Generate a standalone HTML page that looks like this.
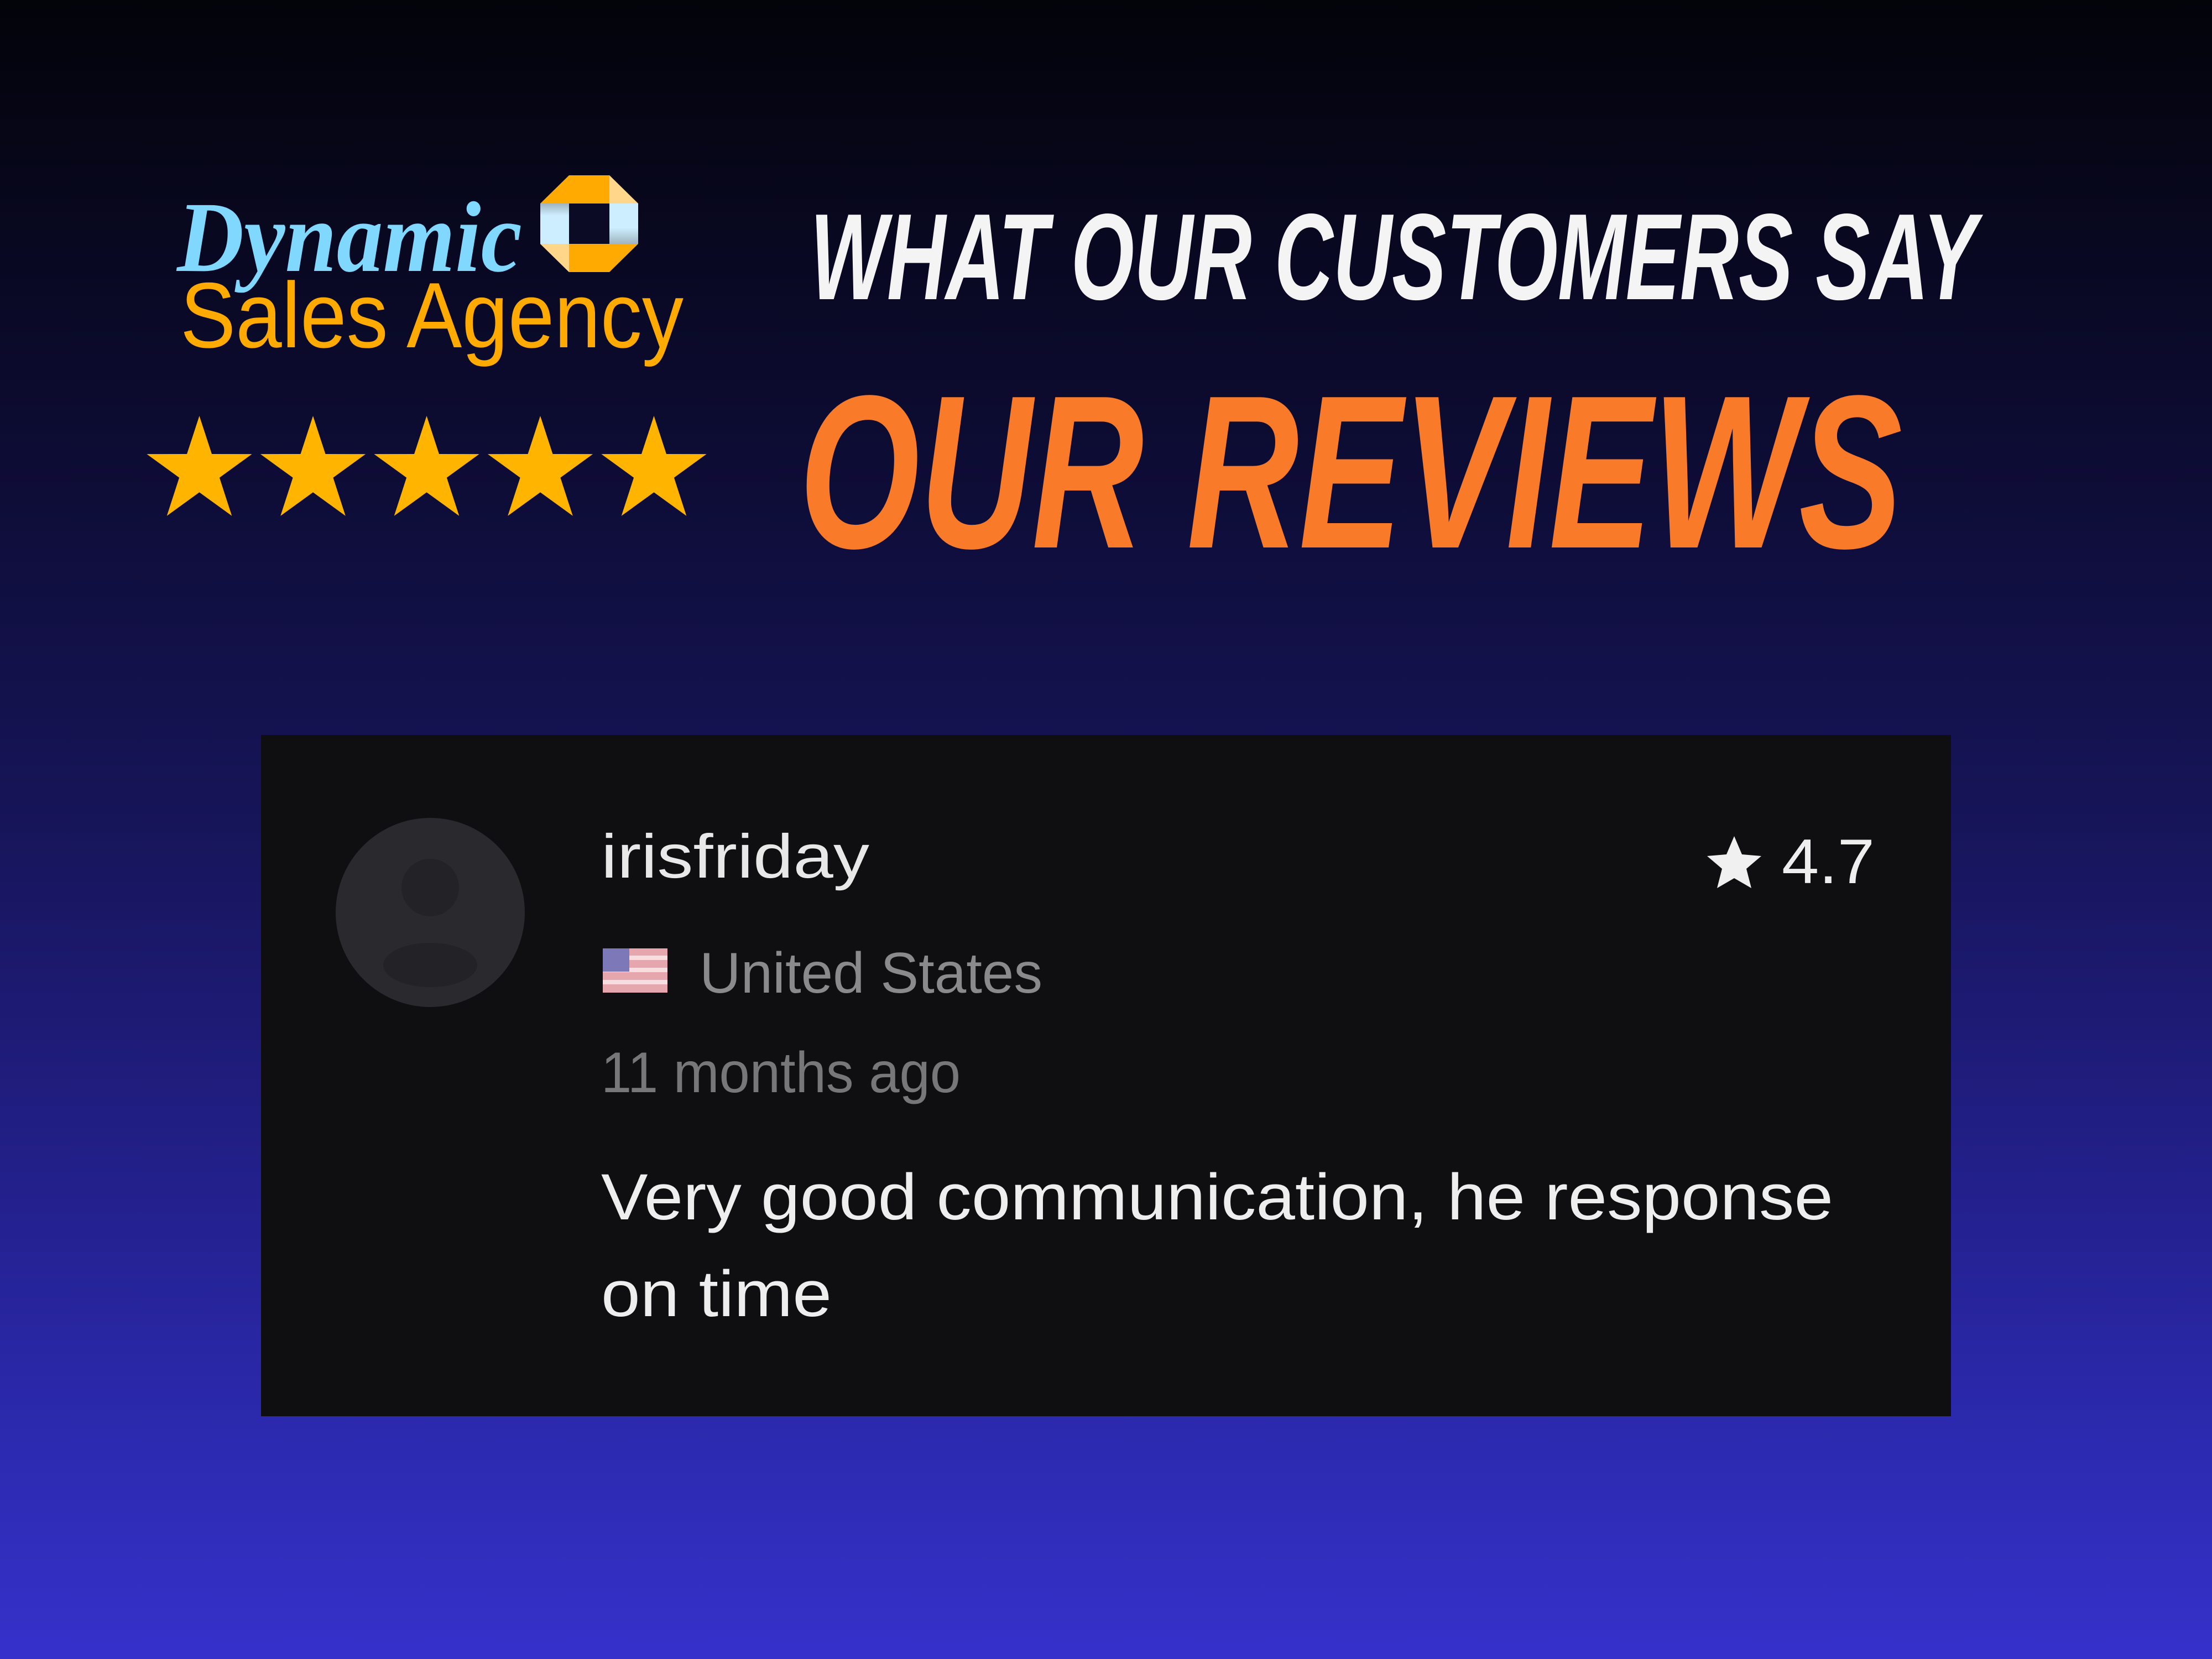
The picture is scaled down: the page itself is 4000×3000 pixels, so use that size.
<!DOCTYPE html>
<html><head><meta charset="utf-8"><style>
html,body{margin:0;padding:0;width:4000px;height:3000px;overflow:hidden}
svg{display:block}
</style></head><body>
<svg width="4000" height="3000" viewBox="0 0 4000 3000" xmlns="http://www.w3.org/2000/svg">
<defs>
<linearGradient id="bg" x1="0" y1="0" x2="0" y2="1">
<stop offset="0" stop-color="#03030a"/>
<stop offset="0.3" stop-color="#0e0d38"/>
<stop offset="0.5" stop-color="#17155a"/>
<stop offset="0.7" stop-color="#221f88"/>
<stop offset="0.87" stop-color="#2c2ab0"/>
<stop offset="1" stop-color="#3631cb"/>
</linearGradient>
<linearGradient id="side" x1="0" y1="0" x2="0" y2="1">
<stop offset="0" stop-color="#9fb4c0"/><stop offset="0.3" stop-color="#cdeeff"/><stop offset="1" stop-color="#cdeeff"/>
</linearGradient>
<linearGradient id="side2" x1="0" y1="0" x2="0" y2="1">
<stop offset="0" stop-color="#cdeeff"/><stop offset="0.6" stop-color="#cdeeff"/><stop offset="1" stop-color="#9fb4c0"/>
</linearGradient>
<path id="star" d="M0,-100 L22.5,-31 L95.1,-30.9 L36.4,11.8 L58.8,80.9 L0,38.3 L-58.8,80.9 L-36.4,11.8 L-95.1,-30.9 L-22.5,-31 Z"/>
</defs>
<rect width="4000" height="3000" fill="url(#bg)"/>

<!-- logo -->
<text x="320" y="490" font-family="Liberation Serif, serif" font-style="italic" font-weight="bold" font-size="182" fill="#80d8ff" textLength="624" lengthAdjust="spacingAndGlyphs">Dynamic</text>
<text x="326" y="628" font-family="Liberation Sans, sans-serif" font-size="168" fill="#ffaa00" textLength="910" lengthAdjust="spacingAndGlyphs">Sales Agency</text>
<polygon points="1029,317 1102,317 1154,368 977,368" fill="#ffaa00"/>
<polygon points="1102,317 1154,368 1102,368" fill="#ffd68a"/>
<rect x="977" y="368" width="52" height="73" fill="url(#side)"/>
<rect x="1102" y="368" width="52" height="73" fill="url(#side2)"/>
<rect x="1029" y="368" width="73" height="73" fill="#0b0b25"/>
<polygon points="977,441 1154,441 1102,492 1029,492" fill="#ffaa00"/>
<polygon points="977,441 1029,441 1029,492" fill="#ffd68a"/>

<!-- stars -->
<g fill="#ffb400">
<use href="#star" transform="translate(360.5,852)"/>
<use href="#star" transform="translate(566,852)"/>
<use href="#star" transform="translate(771.5,852)"/>
<use href="#star" transform="translate(977,852)"/>
<use href="#star" transform="translate(1182.5,852)"/>
</g>

<!-- white heading -->
<text x="1465" y="541" font-family="Liberation Sans Narrow, Liberation Sans, sans-serif" font-weight="bold" font-style="italic" font-size="222" fill="#f4f4f4" textLength="2110" lengthAdjust="spacingAndGlyphs">WHAT OUR CUSTOMERS SAY</text>
<!-- orange heading -->
<text x="1445" y="990" font-family="Liberation Sans Narrow, Liberation Sans, sans-serif" font-weight="bold" font-style="italic" font-size="395" fill="#f97a28" textLength="1995" lengthAdjust="spacingAndGlyphs">OUR REVIEWS</text>

<!-- card -->
<rect x="472" y="1329" width="3056" height="1232" fill="#0f0f11"/>
<circle cx="778" cy="1650" r="171" fill="#2a2a2e"/>
<circle cx="778" cy="1605" r="52" fill="#232327"/>
<ellipse cx="778" cy="1745" rx="85" ry="40" fill="#232327"/>
<text x="1087" y="1587" font-family="Liberation Sans, sans-serif" font-size="112" fill="#e8e8e8" textLength="485" lengthAdjust="spacingAndGlyphs">irisfriday</text>
<path d="M3136,1512 L3150,1545 L3185,1548 L3158,1571 L3167,1606 L3136,1588 L3105,1606 L3114,1571 L3087,1548 L3122,1545 Z" fill="#f0f0f0"/>
<text x="3222" y="1597" font-family="Liberation Sans, sans-serif" font-size="114" fill="#eeeeee" textLength="168" lengthAdjust="spacingAndGlyphs">4.7</text>
<rect x="1090" y="1715" width="117" height="80" fill="#e6a6ae"/>
<g fill="#f7dde0"><rect x="1090" y="1728" width="117" height="8"/><rect x="1090" y="1750" width="117" height="8"/><rect x="1090" y="1772" width="117" height="8"/></g>
<rect x="1090" y="1715" width="48" height="42" fill="#7d78b8"/>
<text x="1265" y="1795" font-family="Liberation Sans, sans-serif" font-size="104" fill="#8a8a8c" textLength="620" lengthAdjust="spacingAndGlyphs">United States</text>
<text x="1087" y="1975" font-family="Liberation Sans, sans-serif" font-size="104" fill="#77777a" textLength="650" lengthAdjust="spacingAndGlyphs">11 months ago</text>
<text x="1087" y="2205" font-family="Liberation Sans, sans-serif" font-size="118" fill="#eeeeee" textLength="2228" lengthAdjust="spacingAndGlyphs">Very good communication, he response</text>
<text x="1087" y="2380" font-family="Liberation Sans, sans-serif" font-size="118" fill="#eeeeee" textLength="417" lengthAdjust="spacingAndGlyphs">on time</text>
</svg>
</body></html>
